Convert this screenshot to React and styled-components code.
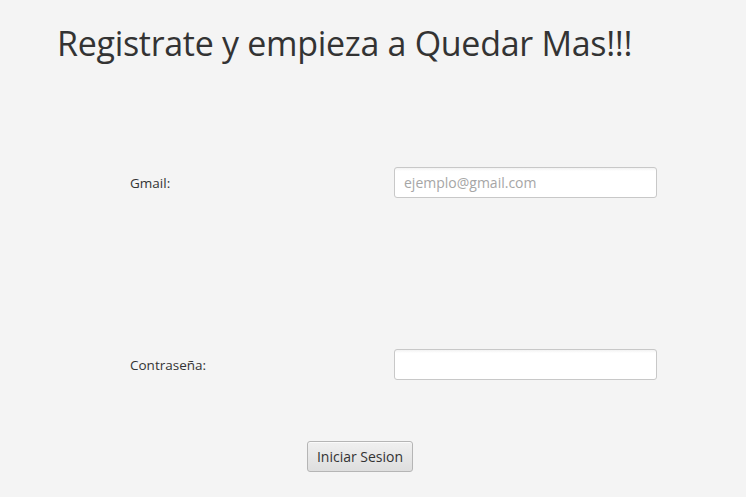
import React from "react";
import styled, { createGlobalStyle } from "styled-components";

const GlobalStyle = createGlobalStyle`
  html, body {
    margin: 0;
    padding: 0;
    background: #f4f4f4;
  }
  body {
    font-family: "Open Sans", "Noto Sans", sans-serif;
    color: #333333;
  }
`;

const Page = styled.div`
  width: 746px;
  height: 497px;
  box-sizing: border-box;
  padding: 20px 0 0 57px;
  background: #f4f4f4;
  overflow: hidden;
`;

const Title = styled.h1`
  margin: 0;
  font-weight: 400;
  font-size: 34px;
  line-height: 46px;
  letter-spacing: -0.3px;
  color: #333333;
`;

const Form = styled.form`
  display: flex;
  flex-direction: column;
  margin: 101px 0 0 73px;
`;

const Fields = styled.div`
  display: grid;
  grid-template-columns: 264px 263px;
  row-gap: 151px;
  align-items: center;
`;

const Label = styled.label`
  font-size: 13.5px;
  color: #333333;
`;

const Input = styled.input`
  box-sizing: border-box;
  width: 263px;
  height: 31px;
  padding: 0 9px;
  border: 1px solid #c8c8c8;
  border-radius: 3px;
  background: linear-gradient(#f2f2f2 0, #ffffff 3px);
  font-family: "Open Sans", "Noto Sans", sans-serif;
  font-size: 14px;
  color: #333333;
  outline: none;

  &::placeholder {
    color: #a6a6a6;
  }
`;

const Actions = styled.div`
  display: flex;
  margin: 61px 0 0 177px;
`;

const Button = styled.button`
  box-sizing: border-box;
  width: 106px;
  height: 31px;
  border: 1px solid #b5b5b5;
  border-radius: 3px;
  background: linear-gradient(#f0f0f0, #dedede);
  box-shadow: inset 0 1px 0 #fafafa;
  font-family: "Open Sans", "Noto Sans", sans-serif;
  font-size: 14px;
  color: #333333;
  padding: 0;
`;

export default function App() {
  return (
    <>
      <GlobalStyle />
      <Page>
        <Title>Registrate y empieza a Quedar Mas!!!</Title>
        <Form onSubmit={(e) => e.preventDefault()}>
          <Fields>
            <Label htmlFor="gmail">Gmail:</Label>
            <Input id="gmail" type="email" placeholder="ejemplo@gmail.com" />
            <Label htmlFor="pass">Contraseña:</Label>
            <Input id="pass" type="password" />
          </Fields>
          <Actions>
            <Button type="submit">Iniciar Sesion</Button>
          </Actions>
        </Form>
      </Page>
    </>
  );
}
